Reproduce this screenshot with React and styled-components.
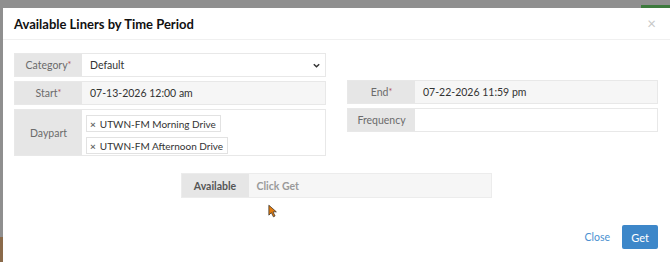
import React from 'react';
import styled, { createGlobalStyle } from 'styled-components';

const GlobalStyle = createGlobalStyle`
  html, body { margin: 0; padding: 0; }
  body {
    background: #8f8f8f;
    font-family: Lato, "Noto Sans", sans-serif;
    width: 670px;
    height: 262px;
    overflow: hidden;
  }
`;

export default function App() {
  return (
    <Backdrop>
      <GlobalStyle />
      <GreenBar />
      <BrownBit />
      <Modal>
        <Header>
          <Title>Available Liners by Time Period</Title>
          <CloseX>×</CloseX>
        </Header>
        <Body>
          <Columns>
            <Column>
              <Field>
                <Label>Category<Req>*</Req></Label>
                <SelectBox>
                  <span>Default</span>
                  <Caret viewBox="0 0 10 10">
                    <path d="M2 3.5 L5 6.5 L8 3.5" fill="none" stroke="#333" strokeWidth="1.6" />
                  </Caret>
                </SelectBox>
              </Field>
              <Field>
                <Label>Start<Req>*</Req></Label>
                <Input readOnlyLook>07-13-2026 12:00 am</Input>
              </Field>
              <Field tall>
                <Label>Daypart</Label>
                <TagBox>
                  <Tag><TagX>×</TagX>UTWN-FM Morning Drive</Tag>
                  <Tag><TagX>×</TagX>UTWN-FM Afternoon Drive</Tag>
                </TagBox>
              </Field>
            </Column>
            <Column>
              <Spacer />
              <Field>
                <Label>End<Req>*</Req></Label>
                <Input readOnlyLook>07-22-2026 11:59 pm</Input>
              </Field>
              <Field>
                <Label>Frequency</Label>
                <Input />
              </Field>
            </Column>
          </Columns>
          <AvailRow>
            <AvailLabel>Available</AvailLabel>
            <AvailValue>Click Get</AvailValue>
          </AvailRow>
        </Body>
        <Footer>
          <LinkBtn>Close</LinkBtn>
          <PrimaryBtn>Get</PrimaryBtn>
        </Footer>
        <Cursor viewBox="0 0 12 16">
          <path d="M1 1 L1 13 L4 10 L6.5 15 L8.5 14 L6 9 L10 9 Z" fill="#e07b10" stroke="#222" strokeWidth="0.8" />
        </Cursor>
      </Modal>
    </Backdrop>
  );
}

const Backdrop = styled.div`
  position: relative;
  width: 670px;
  height: 262px;
  padding: 8px 0 0 3px;
  box-sizing: border-box;
`;

const GreenBar = styled.div`
  position: absolute;
  top: 5px;
  right: 0;
  width: 29px;
  height: 3px;
  background: #3d7a3d;
`;

const BrownBit = styled.div`
  position: absolute;
  left: 0;
  top: 237px;
  width: 3px;
  height: 25px;
  background: #8a6a4a;
`;

const Modal = styled.div`
  position: relative;
  background: #fff;
  height: 254px;
  display: flex;
  flex-direction: column;
`;

const Header = styled.div`
  height: 31px;
  border-bottom: 1px solid #f0f0f0;
  display: flex;
  align-items: center;
  justify-content: space-between;
  padding: 0 12px 0 11px;
`;

const Title = styled.h4`
  margin: 0;
  font-size: 13px;
  font-weight: 700;
  color: #111;
`;

const CloseX = styled.span`
  color: #c8c8c8;
  font-size: 15px;
  line-height: 1;
  margin-right: 2px;
`;

const Body = styled.div`
  padding: 13px 12px 0 11px;
`;

const Columns = styled.div`
  display: grid;
  grid-template-columns: 312px 311px;
  column-gap: 21px;
`;

const Column = styled.div`
  display: flex;
  flex-direction: column;
  gap: 4px;
`;

const Spacer = styled.div`
  height: 23px;
`;

const Field = styled.div`
  display: flex;
  height: ${p => (p.tall ? '47px' : '24px')};
  border: 1px solid #e8e8e8;
  box-sizing: border-box;
  font-size: 10.5px;
`;

const Label = styled.div`
  width: 67px;
  flex: none;
  background: #e6e6e6;
  color: #6b6b6b;
  display: flex;
  align-items: center;
  justify-content: center;
`;

const Req = styled.span`
  color: #b05050;
  font-size: 9px;
  align-self: flex-start;
  margin-top: 5px;
`;

const Input = styled.div`
  flex: 1;
  background: ${p => (p.readOnlyLook ? '#f6f6f6' : '#fff')};
  color: #333;
  display: flex;
  align-items: center;
  padding-left: 8px;
`;

const SelectBox = styled(Input)`
  justify-content: space-between;
  padding-right: 4px;
`;

const Caret = styled.svg`
  width: 9px;
  height: 9px;
`;

const TagBox = styled.div`
  flex: 1;
  background: #fff;
  display: flex;
  flex-direction: column;
  align-items: flex-start;
  gap: 5px;
  padding: 5px 0 0 4px;
`;

const Tag = styled.div`
  border: 1px solid #e2e2e2;
  height: 15px;
  display: flex;
  align-items: center;
  padding: 0 4px 0 3px;
  color: #333;
  font-size: 10px;
`;

const TagX = styled.span`
  color: #666;
  font-size: 10px;
  font-weight: 700;
  margin-right: 4px;
`;

const AvailRow = styled.div`
  display: flex;
  width: 311px;
  height: 25px;
  margin: 17px auto 0;
  border: 1px solid #ececec;
  box-sizing: border-box;
  font-size: 10.5px;
  font-weight: 700;
`;

const AvailLabel = styled.div`
  width: 67px;
  background: #e6e6e6;
  color: #555;
  display: flex;
  align-items: center;
  justify-content: center;
`;

const AvailValue = styled.div`
  flex: 1;
  background: #f6f6f6;
  color: #9a9a9a;
  display: flex;
  align-items: center;
  padding-left: 8px;
`;

const Footer = styled.div`
  margin-top: auto;
  display: flex;
  justify-content: flex-end;
  align-items: center;
  gap: 12px;
  padding: 0 12px 13px 0;
`;

const LinkBtn = styled.span`
  color: #4a8fd0;
  font-size: 10.5px;
`;

const PrimaryBtn = styled.button`
  width: 36px;
  height: 24px;
  border: none;
  border-radius: 2px;
  background: #3d87c9;
  color: #fff;
  font-family: inherit;
  font-size: 11px;
  padding: 0;
`;

const Cursor = styled.svg`
  position: absolute;
  left: 265px;
  top: 196px;
  width: 10px;
  height: 14px;
`;
